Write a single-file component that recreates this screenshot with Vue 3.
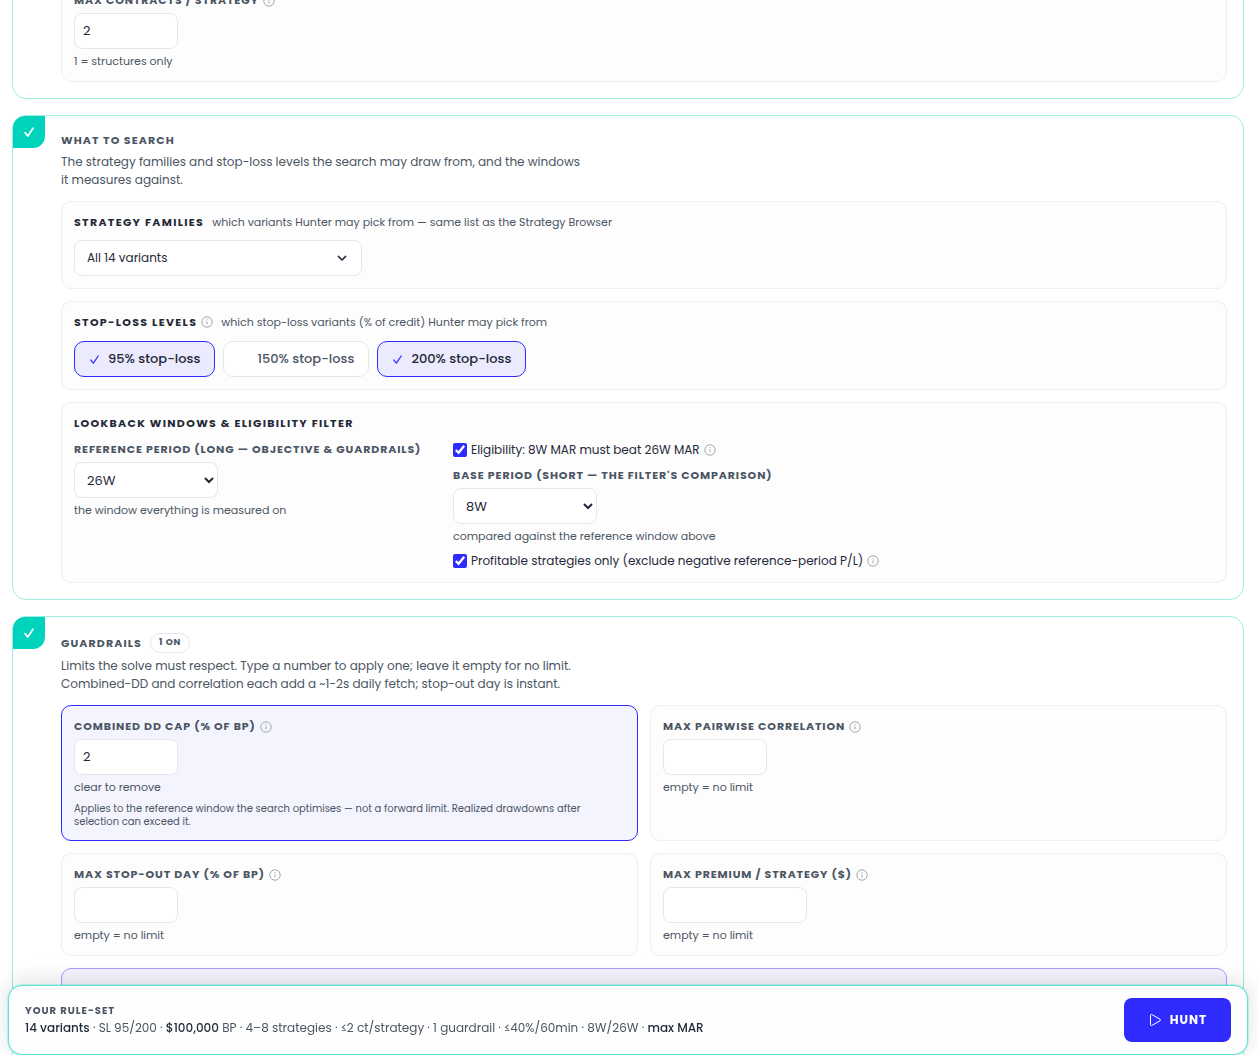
<template>
  <svg class="sprite" aria-hidden="true">
    <symbol id="icon-info" viewBox="0 0 12 12">
      <circle cx="6" cy="6" r="5.2" fill="none" stroke="currentColor" />
      <path d="M6 5.4v3" fill="none" stroke="currentColor" />
      <path d="M6 3.2v1.1" fill="none" stroke="currentColor" />
    </symbol>
    <symbol id="icon-check" viewBox="0 0 12 12">
      <path
        d="M2 6.6 4.8 10 10 2.2"
        fill="none"
        stroke="currentColor"
        stroke-linecap="round"
        stroke-linejoin="round"
      />
    </symbol>
  </svg>

  <main class="page">
    <section class="step first">
      <div class="panel">
        <div class="label-row">
          <label class="label" for="max-contracts">Max contracts / strategy</label>
          <svg class="info"><use href="#icon-info" /></svg>
        </div>
        <input id="max-contracts" v-model="maxContracts" class="box" type="text" />
        <p class="hint">1 = structures only</p>
      </div>
    </section>

    <section class="step">
      <span class="done"><svg><use href="#icon-check" /></svg></span>
      <h2 class="label title">What to search</h2>
      <p class="desc">
        The strategy families and stop-loss levels the search may draw from, and the windows<br />
        it measures against.
      </p>

      <div class="panel">
        <div class="panel-head">
          <h3 class="label dark">Strategy families</h3>
          <span class="aside">which variants Hunter may pick from — same list as the Strategy Browser</span>
        </div>
        <button class="picker" type="button">
          All 14 variants
          <svg viewBox="0 0 14 14">
            <path
              d="M3.4 5.4 7 9l3.6-3.6"
              fill="none"
              stroke="currentColor"
              stroke-width="1.5"
              stroke-linecap="round"
              stroke-linejoin="round"
            />
          </svg>
        </button>
      </div>

      <div class="panel">
        <div class="panel-head">
          <h3 class="label dark">Stop-loss levels</h3>
          <svg class="info"><use href="#icon-info" /></svg>
          <span class="aside">which stop-loss variants (% of credit) Hunter may pick from</span>
        </div>
        <div class="chips">
          <button
            v-for="level in levels"
            :key="level.pct"
            class="chip"
            :class="{ on: level.on }"
            type="button"
            :aria-pressed="level.on"
            @click="level.on = !level.on"
          >
            <svg><use v-if="level.on" href="#icon-check" /></svg>
            {{ level.pct }}% stop-loss
          </button>
        </div>
      </div>

      <div class="panel">
        <div class="panel-head">
          <h3 class="label dark">Lookback windows &amp; eligibility filter</h3>
        </div>
        <div class="windows">
          <div>
            <label class="label" for="ref-period">Reference period (long — objective &amp; guardrails)</label>
            <select id="ref-period" v-model="refPeriod" class="box wide">
              <option>26W</option>
              <option>52W</option>
            </select>
            <p class="hint">the window everything is measured on</p>
          </div>
          <div>
            <div class="check-row top">
              <input id="eligibility" v-model="eligibility" type="checkbox" />
              <label for="eligibility">Eligibility: 8W MAR must beat 26W MAR</label>
              <svg class="info"><use href="#icon-info" /></svg>
            </div>
            <label class="label" for="base-period">Base period (short — the filter's comparison)</label>
            <select id="base-period" v-model="basePeriod" class="box wide">
              <option>8W</option>
              <option>13W</option>
            </select>
            <p class="hint">compared against the reference window above</p>
            <div class="check-row bottom">
              <input id="profitable" v-model="profitable" type="checkbox" />
              <label for="profitable">Profitable strategies only (exclude negative reference-period P/L)</label>
              <svg class="info"><use href="#icon-info" /></svg>
            </div>
          </div>
        </div>
      </div>
    </section>

    <section class="step">
      <span class="done"><svg><use href="#icon-check" /></svg></span>
      <div class="title-row">
        <h2 class="label title">Guardrails</h2>
        <span class="pill">1 on</span>
      </div>
      <p class="desc">
        Limits the solve must respect. Type a number to apply one; leave it empty for no limit.<br />
        Combined-DD and correlation each add a ~1-2s daily fetch; stop-out day is instant.
      </p>

      <div class="guards">
        <div v-for="g in guards" :key="g.id" class="panel" :class="{ active: g.value }">
          <div class="label-row">
            <label class="label" :for="g.id">{{ g.label }}</label>
            <svg class="info"><use href="#icon-info" /></svg>
          </div>
          <input :id="g.id" v-model="g.value" class="box" :class="{ wide: g.wide }" type="text" />
          <p class="hint">{{ g.value ? "clear to remove" : "empty = no limit" }}</p>
          <p v-if="g.note" class="note">{{ g.note }}</p>
        </div>
      </div>
      <div class="panel tinted"></div>
    </section>
  </main>

  <footer class="bar">
    <div>
      <h2 class="label small">Your rule-set</h2>
      <p class="summary">
        <b>14 variants</b> · SL 95/200 · <b>$100,000</b> BP · 4–8 strategies · ≤2 ct/strategy · 1
        guardrail · ≤40%/60min · 8W/26W · <b>max MAR</b>
      </p>
    </div>
    <button class="hunt" type="button">
      <svg viewBox="0 0 14 14">
        <path
          d="M2.5 2.2v9.6c0 .7.6 1 1.200.7l8.300-4.700c.6-.4.6-1.200 0-1.600L3.700 1.500c-.6-.3-1.200 0-1.200.7z"
          fill="none"
          stroke="currentColor"
        />
      </svg>
      HUNT
    </button>
  </footer>
</template>

<script setup>
import { ref } from "vue";

const maxContracts = ref("2");
const refPeriod = ref("26W");
const basePeriod = ref("8W");
const eligibility = ref(true);
const profitable = ref(true);

const levels = ref([
  { pct: 95, on: true },
  { pct: 150, on: false },
  { pct: 200, on: true },
]);

const guards = ref([
  {
    id: "dd-cap",
    label: "Combined DD cap (% of BP)",
    value: "2",
    note: "Applies to the reference window the search optimises — not a forward limit. Realized drawdowns after selection can exceed it.",
  },
  { id: "correlation", label: "Max pairwise correlation", value: "" },
  { id: "stop-out", label: "Max stop-out day (% of BP)", value: "" },
  { id: "premium", label: "Max premium / strategy ($)", value: "", wide: true },
]);
</script>

<style>
body {
  margin: 0;
  background: #fff;
  font-family: Poppins, "Open Sans", sans-serif;
  font-size: 12px;
  line-height: 18px;
  color: #4b5563;
}
</style>

<style scoped>
* {
  box-sizing: border-box;
}

h2,
h3,
p {
  margin: 0;
}

button,
input,
select {
  font-family: inherit;
}

.sprite {
  position: absolute;
  width: 0;
  height: 0;
}

.page {
  height: 100vh;
  overflow: hidden;
  padding: 0 14px 0 12px;
}

.step {
  position: relative;
  padding: 16px 16px 16px 48px;
  border: 1px solid #99eee2;
  border-radius: 14px;
  margin-bottom: 16px;
}

.step.first {
  margin-top: -38px;
}

.done {
  position: absolute;
  top: 0;
  left: 0;
  display: grid;
  place-items: center;
  width: 32px;
  height: 32px;
  border-radius: 12px 0 12px 0;
  background: #00d3bb;
  color: #fff;
}

.done svg {
  width: 12px;
  height: 12px;
  stroke-width: 1.8;
}

.label {
  display: block;
  font-size: 11px;
  line-height: 17px;
  font-weight: 700;
  letter-spacing: 0.08em;
  text-transform: uppercase;
  white-space: nowrap;
  color: #4b5563;
}

.label.title {
  letter-spacing: 0.1em;
}

.label.dark {
  line-height: 16px;
  letter-spacing: 0.12em;
  color: #1f2937;
}

.label.small {
  font-size: 10px;
  line-height: 16px;
  letter-spacing: 0.1em;
}

.desc {
  margin: 4px 0 12px;
}

.panel {
  padding: 12px;
  border: 1px solid #efefef;
  border-radius: 10px;
  background: #fdfdfd;
}

.panel + .panel {
  margin-top: 12px;
}

.panel.active {
  border-color: #2f2bff;
  background: #f4f4ff;
}

.panel.tinted {
  min-height: 120px;
  margin-top: 12px;
  border-color: #a5a0ff;
  background: #f5f4ff;
}

.panel-head,
.label-row,
.title-row,
.check-row {
  display: flex;
  align-items: center;
}

.aside {
  margin-left: 8px;
  font-size: 11px;
  line-height: 16px;
}

.info {
  flex: none;
  width: 12px;
  height: 12px;
  margin-left: 4px;
  color: #a3a7ae;
}

.picker {
  display: flex;
  align-items: center;
  justify-content: space-between;
  width: 288px;
  height: 36px;
  margin-top: 10px;
  padding: 0 12px;
  border: 1px solid #e5e7eb;
  border-radius: 8px;
  background: #fff;
  font-size: 12px;
  color: #1f2937;
}

.picker svg {
  width: 14px;
  height: 14px;
}

.chips {
  display: flex;
  gap: 8px;
  margin-top: 11px;
}

.chip {
  display: flex;
  align-items: center;
  gap: 8px;
  height: 36px;
  padding: 0 14px;
  border: 1px solid #e5e7eb;
  border-radius: 10px;
  background: #fff;
  font-size: 13px;
  font-weight: 500;
  color: #4b5563;
}

.chip svg {
  width: 11px;
  height: 11px;
  stroke-width: 1.4;
  color: #2f2bff;
}

.chip.on {
  border-color: #2f2bff;
  background: #ecebfd;
  color: #1f2937;
}

.box {
  display: block;
  width: 104px;
  height: 36px;
  margin: 4px 0;
  padding: 0 8px;
  border: 1px solid #e5e7eb;
  border-radius: 8px;
  background: #fff;
  font-size: 13px;
  color: #1f2937;
}

.box.wide {
  width: 144px;
}

.hint {
  font-size: 11px;
  line-height: 16px;
}

.note {
  margin-top: 7px;
  font-size: 10px;
  line-height: 13px;
}

.windows {
  display: grid;
  grid-template-columns: 347px 1fr;
  gap: 32px;
  margin-top: 10px;
}

.check-row {
  color: #1f2937;
}

.check-row.top {
  margin-bottom: 8px;
}

.check-row.bottom {
  margin-top: 8px;
}

.check-row input {
  width: 14px;
  height: 14px;
  margin: 0 4px 0 0;
  accent-color: #2f2bff;
}

.pill {
  height: 20px;
  margin-left: 8px;
  padding: 0 8px;
  border: 1px solid #e5e7eb;
  border-radius: 10px;
  font-size: 9px;
  line-height: 17px;
  font-weight: 700;
  letter-spacing: 0.08em;
  text-transform: uppercase;
}

.guards {
  display: grid;
  grid-template-columns: 1fr 1fr;
  gap: 12px;
}

.guards .panel {
  margin-top: 0;
}

.bar {
  position: fixed;
  right: 10px;
  bottom: 0;
  left: 8px;
  display: flex;
  align-items: center;
  justify-content: space-between;
  padding: 12px 16px;
  border: 1px solid #5fe3d3;
  border-radius: 14px;
  background: #fefefe;
  box-shadow:
    0 0 0 1px rgba(0, 211, 187, 0.2),
    0 -4px 24px rgba(0, 0, 0, 0.12);
}

.summary b {
  font-weight: 500;
  color: #1f2937;
}

.hunt {
  display: flex;
  align-items: center;
  justify-content: center;
  gap: 8px;
  height: 44px;
  padding: 0 24px;
  border: 0;
  border-radius: 8px;
  background: #2f2bff;
  font-size: 12px;
  font-weight: 700;
  letter-spacing: 0.08em;
  color: #fff;
}

.hunt svg {
  width: 14px;
  height: 14px;
}
</style>
